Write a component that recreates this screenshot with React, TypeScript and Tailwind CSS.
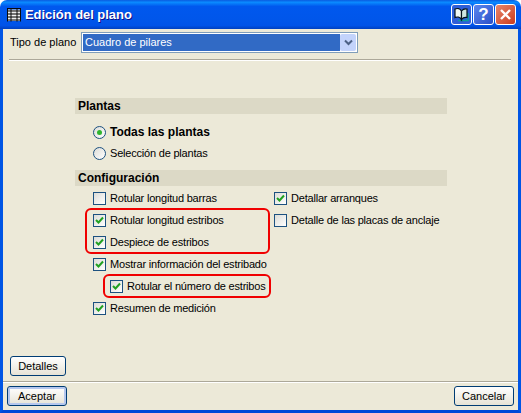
const uiFont = { fontFamily: '"Liberation Sans", Arial, sans-serif' };

function CheckBox({ checked = false }: { checked?: boolean }) {
  return (
    <span className="flex h-[13px] w-[13px] shrink-0 items-center justify-center border border-[#1c5180] bg-gradient-to-br from-[#dcdcd7] to-white">
      {checked && (
        <svg width="9" height="9" viewBox="0 0 9 9">
          <path d="M1 4 L3.5 6.5 L8 1.5" fill="none" stroke="#21a121" strokeWidth="2" />
        </svg>
      )}
    </span>
  );
}

function Radio({ checked = false }: { checked?: boolean }) {
  return (
    <span className="flex h-[13px] w-[13px] shrink-0 items-center justify-center rounded-full border border-[#1c5180] bg-gradient-to-br from-[#dcdcd7] to-white">
      {checked && <span className="h-[5px] w-[5px] rounded-full bg-[#2fb52f]" />}
    </span>
  );
}

function Row({ label, checked }: { label: string; checked?: boolean }) {
  return (
    <div className="flex h-[22px] items-center gap-[4px] text-[11px] tracking-[-0.2px] text-black">
      <CheckBox checked={checked} />
      <span className="whitespace-nowrap">{label}</span>
    </div>
  );
}

function SectionHeader({ title }: { title: string }) {
  return (
    <div className="flex h-[16px] items-center bg-[#dcd9c6] pl-[3px] text-[12px] font-bold text-black">{title}</div>
  );
}

function XpButton({ label, className = "" }: { label: string; className?: string }) {
  return (
    <div
      className={`flex h-[20px] items-center justify-center rounded-[3px] border border-[#003c74] bg-gradient-to-b from-white to-[#e6e3d6] text-[11px] text-black ${className}`}
    >
      {label}
    </div>
  );
}

function TitleButton({ className = "", children }: { className?: string; children: React.ReactNode }) {
  return (
    <div className={`flex h-[21px] w-[21px] items-center justify-center rounded-[3px] border border-white ${className}`}>
      {children}
    </div>
  );
}

export default function App() {
  return (
    <div className="flex h-[413px] w-[521px] flex-col overflow-hidden bg-white" style={uiFont}>
      {/* title bar */}
      <div className="flex h-[29px] shrink-0 items-center rounded-t-[7px] bg-[linear-gradient(180deg,#0a5be0_0%,#0a8bff_8%,#0058ee_22%,#0056ea_70%,#0053e8_88%,#0040c0_100%)] pl-[6px] pr-[5px]">
        <svg width="16" height="16" viewBox="0 0 16 16" className="mr-[3px]">
          <path d="M2 2.5H14V14H2Z" fill="#d8d8d8" />
          <path d="M2 5H14M2 8.5H14M2 12H14" stroke="#f4f4f4" strokeWidth="1.4" fill="none" />
          <path d="M1 1.5H15M1 4H15M1 7H15M1 10H15M1 13H15" stroke="#0a0a0a" strokeWidth="1.2" fill="none" />
          <path d="M1.5 1V14.5M5 1V14.5M11 1V14.5M14.5 1V14.5" stroke="#0a0a0a" strokeWidth="1" fill="none" />
        </svg>
        <span className="pt-[1px] text-[13px] font-bold tracking-[-0.05px] text-white [text-shadow:1px_1px_#0f1089]">
          Edición del plano
        </span>
        <div className="ml-auto flex gap-[1px]">
          <TitleButton className="bg-[#2f5fd8]">
            <svg width="17" height="17" viewBox="0 0 17 17">
              <path d="M5 14.5 H15 V7" fill="none" stroke="#0aa09a" strokeWidth="1.6" />
              <path d="M8.5 5 C7 2.5 4 2 2 3 V11.5 C4 10.5 7 11 8.5 13.5 Z" fill="#f0f7f4" stroke="#06131c" strokeWidth="1.2" />
              <path d="M8.5 5 C10 3 12 2.5 14 3 V11.5 C12 11 10 11.5 8.5 13.5 Z" fill="#cfe6e0" stroke="#06131c" strokeWidth="1.2" />
            </svg>
          </TitleButton>
          <TitleButton className="bg-gradient-to-br from-[#5c86ee] to-[#2a4fc8]">
            <span className="text-[17px] font-bold leading-none text-white">?</span>
          </TitleButton>
          <TitleButton className="bg-gradient-to-br from-[#e8856a] to-[#c8391a]">
            <svg width="13" height="13" viewBox="0 0 13 13">
              <path d="M2 2 L11 11 M11 2 L2 11" stroke="#fff" strokeWidth="2.4" />
            </svg>
          </TitleButton>
        </div>
      </div>

      {/* client area */}
      <div className="relative flex flex-1 flex-col border-x-[3px] border-b-[3px] border-[#0055e5] border-b-[#0048d8] bg-[#ece9d8]">
        <div className="flex h-[23px] items-center pl-[7px] pt-[3px] text-[11px] text-black">
          <span className="w-[71px]">Tipo de plano</span>
          <div className="flex h-[21px] w-[277px] items-center justify-between border border-[#7f9db9] bg-white p-[1px]">
            <span className="flex h-full flex-1 items-center bg-[#316ac5] pl-[2px] text-white">Cuadro de pilares</span>
            <span className="flex h-[17px] w-[16px] items-center justify-center rounded-[2px] bg-[#c3d3fb]">
              <svg width="9" height="7" viewBox="0 0 9 7">
                <path d="M1 1.5 L4.5 5 L8 1.5" fill="none" stroke="#4d6185" strokeWidth="2" />
              </svg>
            </span>
          </div>
        </div>

        <div className="ml-[6px] mr-[7px] mt-[7px] h-[2px] border-b border-t border-b-white border-t-[#aca899]" />

        <div className="ml-[72px] mt-[37px] w-[372px]">
          <SectionHeader title="Plantas" />
          <div className="mt-[7px] flex h-[22px] items-center gap-[4px] pl-[18px] text-[12px] font-bold text-black">
            <Radio checked />
            <span>Todas las plantas</span>
          </div>
          <div className="flex h-[21px] items-center gap-[4px] pl-[18px] text-[11px] tracking-[-0.2px] text-black">
            <Radio />
            <span>Selección de plantas</span>
          </div>
          <div className="mt-[6px]">
            <SectionHeader title="Configuración" />
          </div>
          <div className="flex pt-[1px]">
            <div className="w-[199px] pl-[18px]">
              <Row label="Rotular longitud barras" />
              <div className="relative">
                <div className="absolute -bottom-[1px] -left-[8px] -top-[1px] w-[185px] rounded-[6px] border-[2px] border-[#f00000]" />
                <Row label="Rotular longitud estribos" checked />
                <Row label="Despiece de estribos" checked />
              </div>
              <Row label="Mostrar información del estribado" checked />
              <div className="relative ml-[17px]">
                <div className="absolute -bottom-[1px] -left-[7px] -top-[1px] w-[168px] rounded-[6px] border-[2px] border-[#f00000]" />
                <Row label="Rotular el número de estribos" checked />
              </div>
              <Row label="Resumen de medición" checked />
            </div>
            <div>
              <Row label="Detallar arranques" checked />
              <Row label="Detalle de las placas de anclaje" />
            </div>
          </div>
        </div>

        <div className="mt-auto pl-[7px]">
          <XpButton label="Detalles" className="w-[56px]" />
        </div>
        <div className="mt-[5px] h-[2px] border-b border-t border-b-white border-t-[#aca899]" />
        <div className="flex justify-between px-[4px] pb-[4px] pt-[3px]">
          <XpButton label="Aceptar" className="w-[60px] shadow-[inset_0_0_0_2px_#b5c7ee]" />
          <XpButton label="Cancelar" className="w-[60px]" />
        </div>
      </div>
    </div>
  );
}
